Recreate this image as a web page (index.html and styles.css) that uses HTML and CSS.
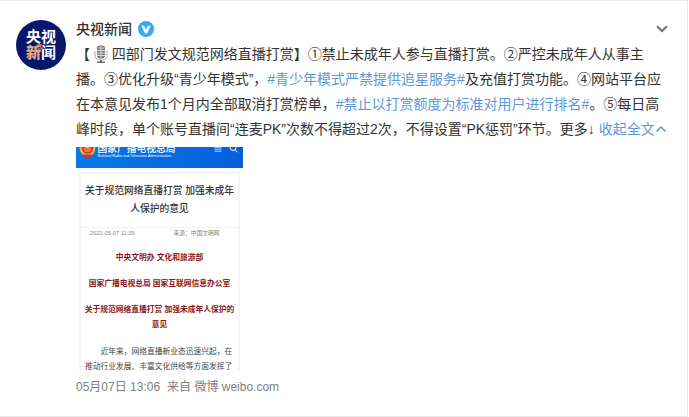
FILE: index.html
```html
<!DOCTYPE html>
<html lang="zh-CN">
<head>
<meta charset="utf-8">
<title>央视新闻</title>
<link rel="stylesheet" href="styles.css">
</head>
<body>
<article class="card">
  <a class="avatar" href="#"><span>央视</span><span><b class="accent">新</b>闻</span><i class="at">@</i></a>
  <div class="content">
    <header class="head">
      <a class="name" href="#">央视新闻</a>
      <svg class="badge" viewBox="0 0 16 16" aria-hidden="true"><circle cx="8" cy="8" r="8" fill="#33a9f6"/><path d="M3.300 4.800h2.800L8 8.700l1.900-3.900h2.800L9 12.400H7z" fill="#fff"/></svg>
      <button class="more" type="button" aria-label="更多操作"><svg viewBox="0 0 12 8"><path d="M1 1.200 6 6l5-4.800" fill="none" stroke="#697480" stroke-width="2"/></svg></button>
    </header>
    <p class="text">【 <svg class="mic" viewBox="0 0 14 18" aria-hidden="true"><path d="M1 6v5q0 4 6 4t6-4V6" fill="none" stroke="#aaa"/><rect x="3" y=".5" width="8" height="13" rx="3" fill="#777"/><path d="M4 3h6M3 5.500h8M3 8h8M3 10.500h8M7 1v12" stroke="#ddd"/><path d="M7 15v2" stroke="#777" stroke-width="2"/><path d="M3 17.300h8" stroke="#666" stroke-width="1.400"/></svg> 四部门发文规范网络直播打赏】①禁止未成年人参与直播打赏。②严控未成年人从事主播。③优化升级“青少年模式”，<a href="#">#青少年模式严禁提供追星服务#</a>及充值打赏功能。④网站平台应在本意见发布1个月内全部取消打赏榜单，<a href="#">#禁止以打赏额度为标准对用户进行排名#</a>。⑤每日高峰时段，单个账号直播间“连麦PK”次数不得超过2次，不得设置“PK惩罚”环节。更多↓ <a class="fold" href="#">收起全文<svg class="caret" viewBox="0 0 12 8" aria-hidden="true"><path d="M1.500 6.500 6 2l4.500 4.500" fill="none" stroke="currentColor" stroke-width="1.500"/></svg></a></p>
    <svg class="photo" viewBox="0 0 668 892" role="img" aria-label="关于规范网络直播打赏 加强未成年人保护的意见">
      <defs><linearGradient id="sky" x2="1" y2="0"><stop stop-color="#0878e6"/><stop offset="1" stop-color="#075fdc"/></linearGradient></defs>
      <rect width="668" height="892" fill="#fff"/>
      <rect width="668" height="84" fill="url(#sky)"/>
      <path d="M14 0h64q0 22-14 32l-6 6H34l-6-6Q14 22 14 0z" fill="#e8b43c"/>
      <path d="M22 0h48q-2 18-14 26H36Q24 18 22 0z" fill="#d92f22"/>
      <path d="M30 8h32M34 16h24M38 2h16" stroke="#f5c84a" stroke-width="4"/>
      <path d="M26 30h40l-8 12H34z" fill="#d92f22"/>
      <g fill="#fff"><text class="p-org" x="86" y="18">国家广播电视总局</text><text class="p-en" x="86" y="39">National Radio and Television Administration</text></g>
      <path d="M554 1h28M554 9h28M554 17h28" stroke="#fff" stroke-width="3"/>
      <g fill="none" stroke="#fff" stroke-width="4"><circle cx="628" cy="2" r="12"/><path d="m636 11 10 10"/></g>
      <path d="M16 892V102h636v790" fill="none" stroke="#eee" stroke-width="5"/>
      <g class="p-title"><text x="334" y="188">关于规范网络直播打赏 加强未成年</text><text x="334" y="259">人保护的意见</text></g>
      <path d="M20 322h628" stroke="#e4e4e4" stroke-width="3" stroke-dasharray="6 4"/>
      <g class="p-meta"><text x="55" y="353">2022-05-07 11:39</text><text x="390" y="353">来源：中国文明网</text></g>
      <g class="p-red"><text x="334" y="451">中央文明办 文化和旅游部</text><text x="334" y="555">国家广播电视总局 国家互联网信息办公室</text><text x="334" y="659">关于规范网络直播打赏 加强未成年人保护的</text><text x="334" y="719">意见</text></g>
      <g class="p-body"><text x="98" y="826">近年来，网络直播新业态迅速兴起，在</text><text x="36" y="886">推动行业发展、丰富文化供给等方面发挥了</text></g>
    </svg>
    <footer class="meta"><time>05月07日 13:06</time><span>来自 微博 weibo.com</span></footer>
  </div>
</article>
</body>
</html>
```
FILE: styles.css
```css
* { box-sizing: border-box; }
body {
  margin: 0;
  background: #fff;
  color: #333;
  font-family: "Liberation Sans", "Noto Sans CJK SC", sans-serif;
  font-size: 14px;
}
a { color: #5c97d8; text-decoration: none; }
.card {
  display: flex;
  align-items: flex-start;
  gap: 10px;
  margin-right: 1px;
  padding: 19px 19px 20px 16px;
  border: solid #e9e9e9;
  border-width: 1px 1px 1px 0;
}
.avatar {
  position: relative;
  display: flex;
  flex: none;
  flex-direction: column;
  align-items: center;
  justify-content: center;
  width: 50px;
  height: 50px;
  border-radius: 50%;
  background: #06176c;
  color: #fff;
  font-size: 15px;
  font-weight: 700;
  line-height: 16px;
}
.accent { color: #f2a77b; }
.at {
  position: absolute;
  top: 23px;
  left: 19px;
  color: #f2a77b;
  font-size: 8px;
  font-weight: 400;
  line-height: 8px;
}
.content { flex: 1; min-width: 0; }
.head { display: flex; align-items: center; gap: 6px; height: 18px; }
.name { color: #333; font-weight: 500; line-height: 18px; }
.badge { width: 16px; height: 16px; }
.more {
  display: flex;
  margin-left: auto;
  padding: 0;
  border: 0;
  background: none;
}
.more svg { width: 12px; height: 8px; }
.text { margin: 4px 0 0; line-height: 25px; }
.mic { width: 14px; height: 18px; vertical-align: -4px; }
.fold { white-space: nowrap; }
.caret { width: 12px; height: 8px; vertical-align: 1px; }
.photo { display: block; width: 167px; height: 223px; margin-top: 5px; overflow: hidden; }
.meta { display: flex; gap: 7px; margin-top: 8px; color: #808080; font-size: 12px; line-height: 18px; }
.p-org { font-size: 39px; font-weight: 500; }
.p-en { font-size: 15px; }
.p-title { fill: #333; font-size: 39px; font-weight: 500; text-anchor: middle; }
.p-meta { fill: #888; font-size: 23px; }
.p-red { fill: #8c1720; font-size: 31px; font-weight: 700; text-anchor: middle; }
.p-body { fill: #444; font-size: 31px; }
```
